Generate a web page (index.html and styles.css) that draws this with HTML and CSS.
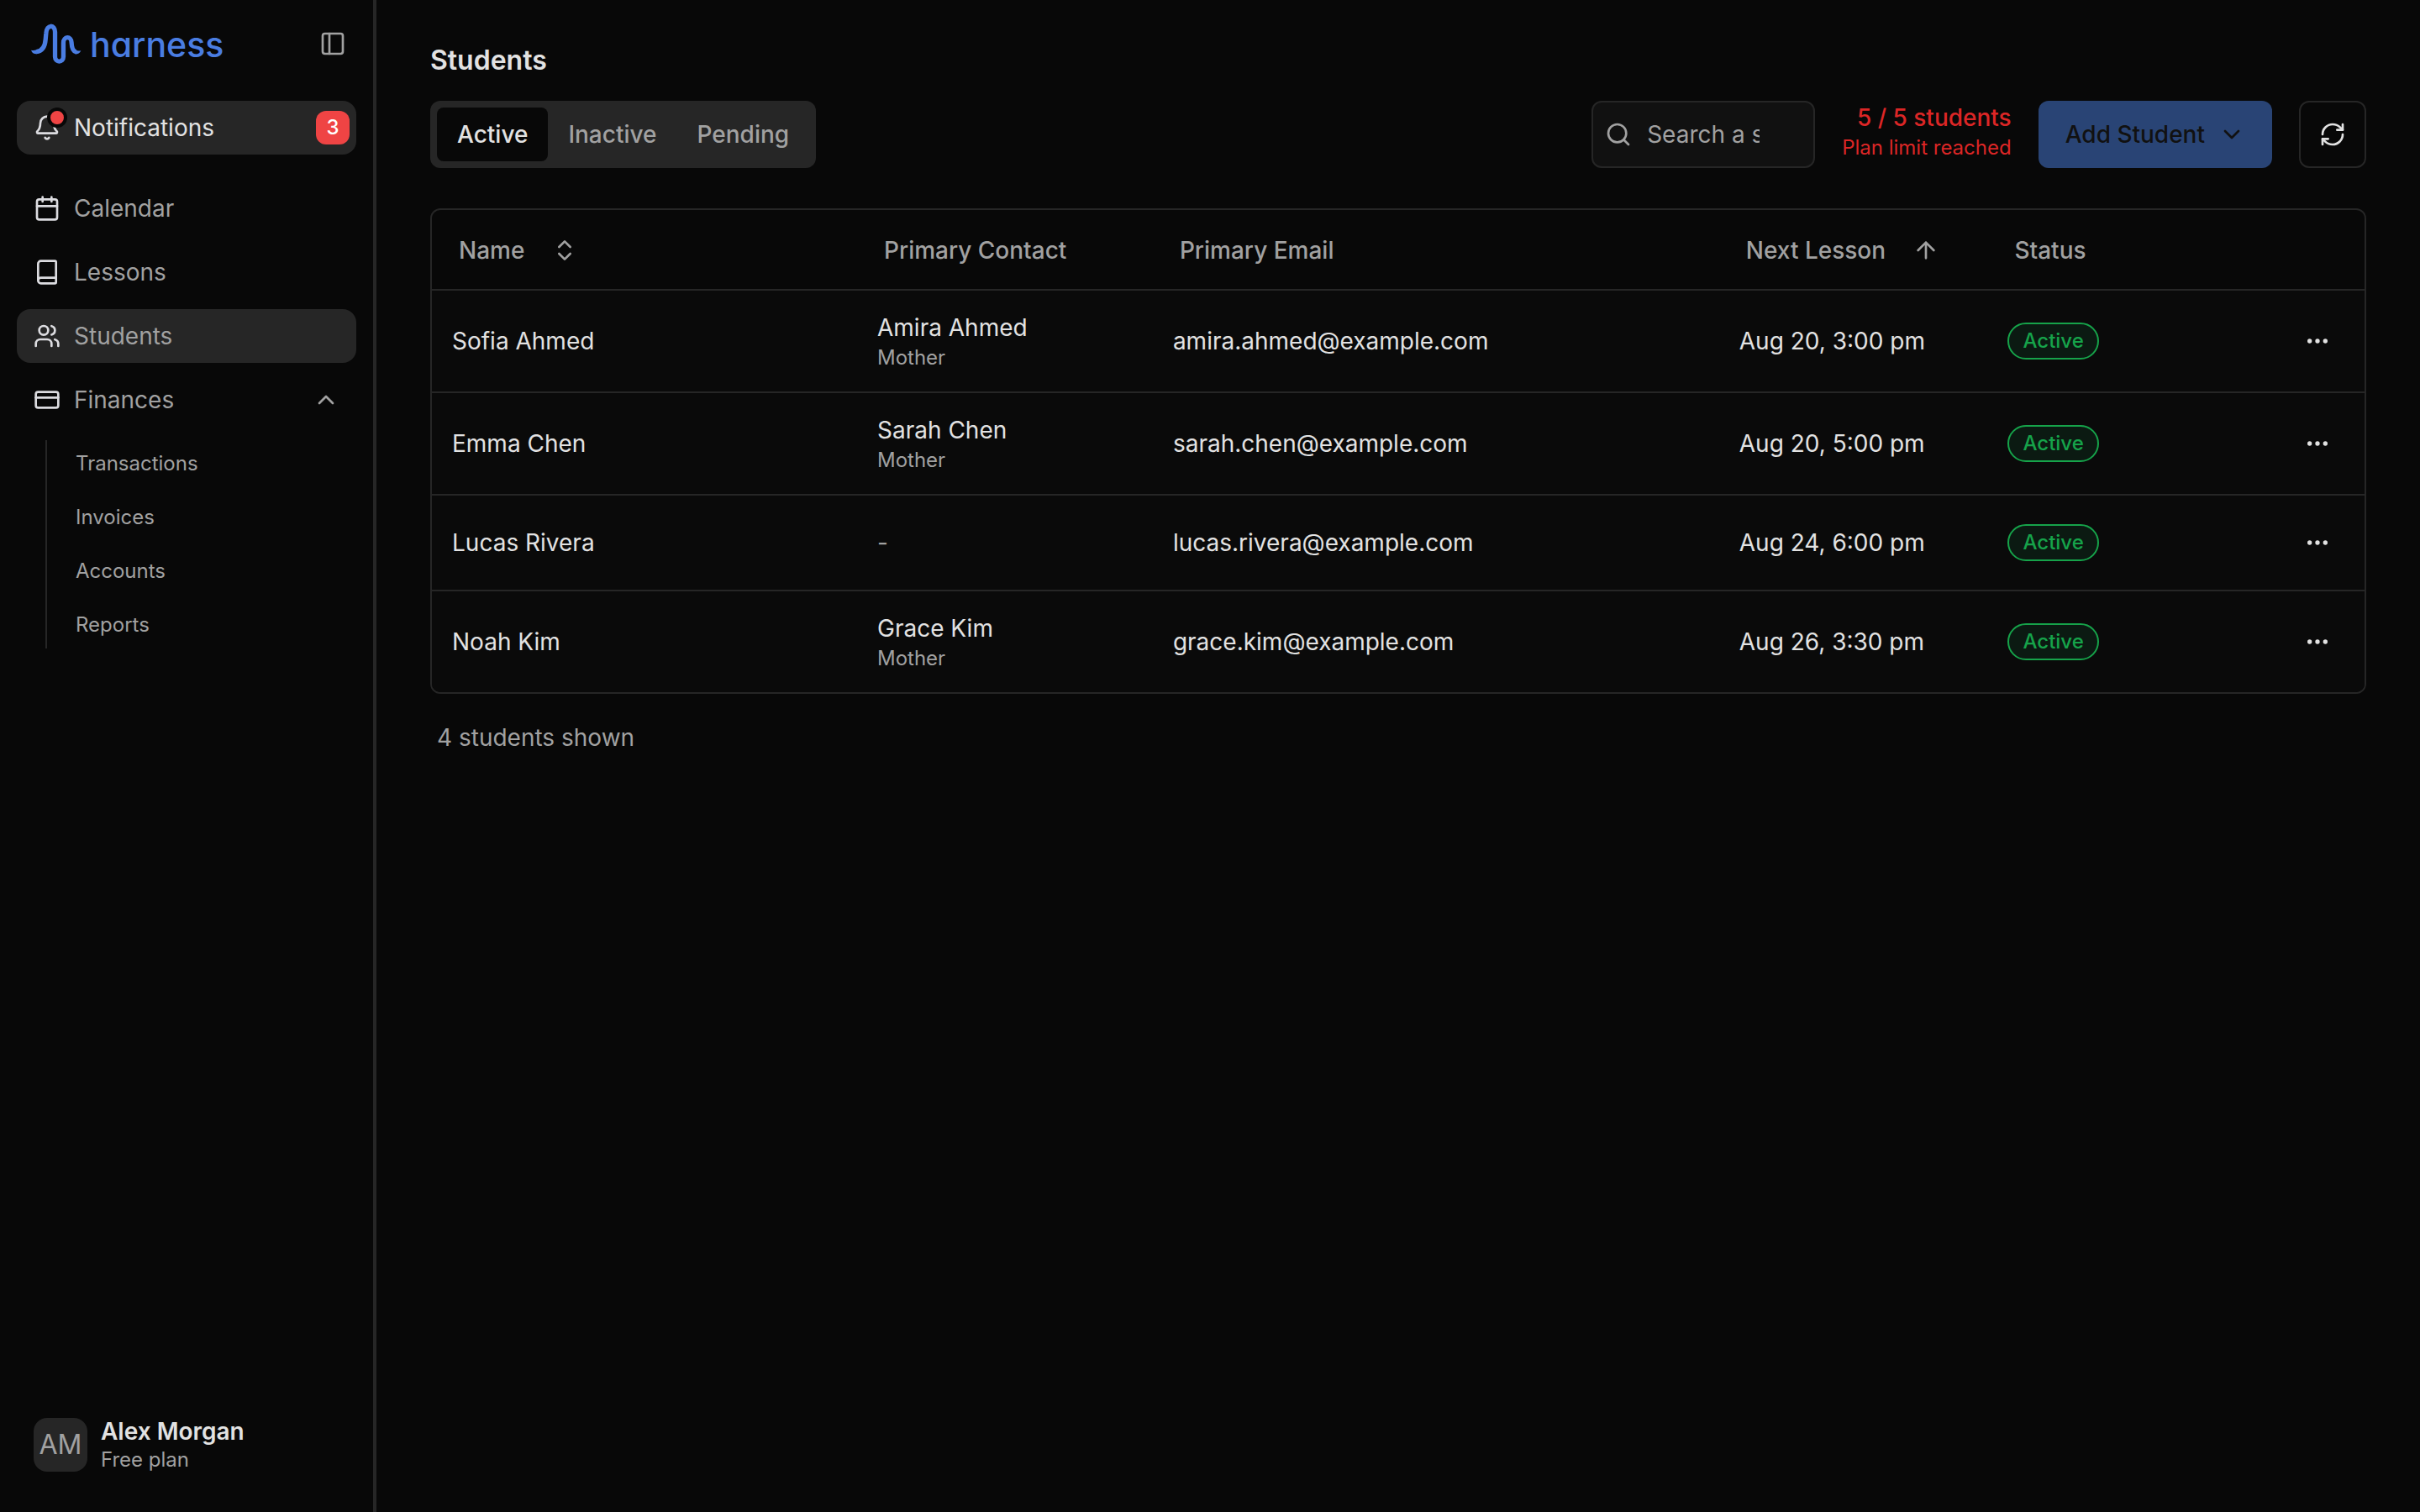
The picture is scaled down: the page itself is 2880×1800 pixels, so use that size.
FILE: index.html
```html
<!DOCTYPE html>
<html lang="en">
<head>
  <meta charset="UTF-8">
  <meta name="viewport" content="width=device-width, initial-scale=1.0">
  <title>Students - Harness</title>
  <link rel="stylesheet" href="styles.css">
</head>
<body>

  <!-- Shared icons -->
  <svg class="sprite" aria-hidden="true">
    <symbol id="panel" viewBox="0 0 24 24"><rect x="3" y="3" width="18" height="18" rx="2"/><path d="M9 3v18"/></symbol>
    <symbol id="bell" viewBox="0 0 24 24"><path d="M10.268 21a2 2 0 0 0 3.464 0"/><path d="M3.262 15.326A1 1 0 0 0 4 17h16a1 1 0 0 0 .74-1.673C19.41 13.956 18 12.499 18 8A6 6 0 0 0 6 8c0 4.499-1.411 5.956-2.738 7.326"/></symbol>
    <symbol id="calendar" viewBox="0 0 24 24"><path d="M8 2v4M16 2v4M3 10h18"/><rect x="3" y="4" width="18" height="18" rx="2"/></symbol>
    <symbol id="book" viewBox="0 0 24 24"><path d="M4 19.5v-15A2.5 2.5 0 0 1 6.5 2H19a1 1 0 0 1 1 1v18a1 1 0 0 1-1 1H6.5a1 1 0 0 1 0-5H20"/></symbol>
    <symbol id="users" viewBox="0 0 24 24"><path d="M16 21v-2a4 4 0 0 0-4-4H6a4 4 0 0 0-4 4v2"/><circle cx="9" cy="7" r="4"/><path d="M22 21v-2a4 4 0 0 0-3-3.87M16 3.13a4 4 0 0 1 0 7.75"/></symbol>
    <symbol id="card" viewBox="0 0 24 24"><rect x="2" y="5" width="20" height="14" rx="2"/><path d="M2 10h20"/></symbol>
    <symbol id="chevron-up" viewBox="0 0 24 24"><path d="m18 15-6-6-6 6"/></symbol>
    <symbol id="chevron-down" viewBox="0 0 24 24"><path d="m6 9 6 6 6-6"/></symbol>
    <symbol id="sort" viewBox="0 0 24 24"><path d="m7 15 5 5 5-5M7 9l5-5 5 5"/></symbol>
    <symbol id="arrow-up" viewBox="0 0 24 24"><path d="m5 12 7-7 7 7M12 19V5"/></symbol>
    <symbol id="search" viewBox="0 0 24 24"><circle cx="11" cy="11" r="8"/><path d="m21 21-4.3-4.3"/></symbol>
    <symbol id="refresh" viewBox="0 0 24 24"><path d="M3 12a9 9 0 0 1 9-9 9.75 9.75 0 0 1 6.74 2.74L21 8"/><path d="M21 3v5h-5"/><path d="M21 12a9 9 0 0 1-9 9 9.75 9.75 0 0 1-6.74-2.74L3 16"/><path d="M8 16H3v5"/></symbol>
    <symbol id="dots" viewBox="0 0 24 24"><circle cx="12" cy="12" r="1"/><circle cx="19" cy="12" r="1"/><circle cx="5" cy="12" r="1"/></symbol>
  </svg>

  <div class="app">
    <aside class="sidebar">
      <div class="sidebar-header">
        <a class="logo" href="#">
          <svg class="logo-mark" viewBox="108 84 184 144" aria-hidden="true">
            <path d="M130 185C150 183 161 168 163 140L165 118C167 86 197 86 197 114V203C197 225 227 225 227 203V153C227 128 255 128 256 151C257 172 262 184 273 186"/>
            <path class="tail" d="M111 179Q120 182 132 177V193Q116 194 111 179ZM270 178Q278 184 290 181Q284 194 270 194Z"/>
          </svg>
          <span class="logo-text">harness</span>
        </a>
        <button class="icon-button toggle" aria-label="Toggle sidebar"><svg class="icon"><use href="#panel"/></svg></button>
      </div>

      <button class="nav-item notifications">
        <span class="bell"><svg class="icon"><use href="#bell"/></svg><span class="dot"></span></span>
        <span class="nav-label">Notifications</span>
        <span class="count">3</span>
      </button>

      <nav class="nav">
        <a class="nav-item" href="#"><svg class="icon"><use href="#calendar"/></svg>Calendar</a>
        <a class="nav-item" href="#"><svg class="icon"><use href="#book"/></svg>Lessons</a>
        <a class="nav-item active" href="#"><svg class="icon"><use href="#users"/></svg>Students</a>
        <button class="nav-item" aria-expanded="true">
          <svg class="icon"><use href="#card"/></svg>
          <span class="nav-label">Finances</span>
          <svg class="icon chevron"><use href="#chevron-up"/></svg>
        </button>
      </nav>
      <div class="subnav">
        <a href="#">Transactions</a>
        <a href="#">Invoices</a>
        <a href="#">Accounts</a>
        <a href="#">Reports</a>
      </div>

      <button class="user">
        <span class="avatar">AM</span>
        <span class="user-info">
          <span class="user-name">Alex Morgan</span>
          <span class="user-plan">Free plan</span>
        </span>
      </button>
    </aside>

    <main class="main">
      <h1>Students</h1>

      <div class="toolbar">
        <div class="tabs" role="tablist">
          <button class="tab selected" role="tab" aria-selected="true">Active</button>
          <button class="tab" role="tab" aria-selected="false">Inactive</button>
          <button class="tab" role="tab" aria-selected="false">Pending</button>
        </div>
        <div class="actions">
          <label class="search">
            <svg class="icon"><use href="#search"/></svg>
            <input type="text" placeholder="Search a student" aria-label="Search a student">
          </label>
          <div class="limit">
            <span class="limit-count">5 / 5 students</span>
            <span class="limit-note">Plan limit reached</span>
          </div>
          <button class="add">Add Student<svg class="icon"><use href="#chevron-down"/></svg></button>
          <button class="icon-button refresh" aria-label="Refresh"><svg class="icon"><use href="#refresh"/></svg></button>
        </div>
      </div>

      <div class="table-wrap">
        <table>
          <colgroup>
            <col class="col-name">
            <col class="col-contact">
            <col class="col-email">
            <col class="col-lesson">
            <col class="col-status">
            <col>
          </colgroup>
          <thead>
            <tr>
              <th><button class="sort">Name<svg class="icon"><use href="#sort"/></svg></button></th>
              <th><span class="head">Primary Contact</span></th>
              <th><span class="head">Primary Email</span></th>
              <th><button class="sort">Next Lesson<svg class="icon"><use href="#arrow-up"/></svg></button></th>
              <th><span class="head">Status</span></th>
              <th></th>
            </tr>
          </thead>
          <tbody>
            <tr>
              <td>Sofia Ahmed</td>
              <td><div>Amira Ahmed</div><div class="relation">Mother</div></td>
              <td>amira.ahmed@example.com</td>
              <td>Aug 20, 3:00 pm</td>
              <td><span class="status">Active</span></td>
              <td><button class="icon-button more" aria-label="Open menu"><svg class="icon"><use href="#dots"/></svg></button></td>
            </tr>
            <tr>
              <td>Emma Chen</td>
              <td><div>Sarah Chen</div><div class="relation">Mother</div></td>
              <td>sarah.chen@example.com</td>
              <td>Aug 20, 5:00 pm</td>
              <td><span class="status">Active</span></td>
              <td><button class="icon-button more" aria-label="Open menu"><svg class="icon"><use href="#dots"/></svg></button></td>
            </tr>
            <tr>
              <td>Lucas Rivera</td>
              <td class="empty">-</td>
              <td>lucas.rivera@example.com</td>
              <td>Aug 24, 6:00 pm</td>
              <td><span class="status">Active</span></td>
              <td><button class="icon-button more" aria-label="Open menu"><svg class="icon"><use href="#dots"/></svg></button></td>
            </tr>
            <tr>
              <td>Noah Kim</td>
              <td><div>Grace Kim</div><div class="relation">Mother</div></td>
              <td>grace.kim@example.com</td>
              <td>Aug 26, 3:30 pm</td>
              <td><span class="status">Active</span></td>
              <td><button class="icon-button more" aria-label="Open menu"><svg class="icon"><use href="#dots"/></svg></button></td>
            </tr>
          </tbody>
        </table>
      </div>

      <p class="summary">4 students shown</p>
    </main>
  </div>

</body>
</html>
```
FILE: styles.css
```css
* {
  box-sizing: border-box;
}

body {
  margin: 0;
  background-color: #080808;
  color: #e2e2e2;
  font-family: Inter, sans-serif;
  font-size: 28px;
  line-height: 40px;
}

button {
  padding: 0;
  border: none;
  background: none;
  color: inherit;
  font: inherit;
  cursor: pointer;
}

a {
  color: inherit;
  text-decoration: none;
}

.sprite {
  position: absolute;
  width: 0;
  height: 0;
}

.icon {
  display: block;
  flex: none;
  width: 32px;
  height: 32px;
  fill: none;
  stroke: currentColor;
  stroke-width: 2;
  stroke-linecap: round;
  stroke-linejoin: round;
}

.icon-button {
  display: flex;
  align-items: center;
  justify-content: center;
}

.app {
  display: flex;
  min-height: 100vh;
}

/* Sidebar */
.sidebar {
  display: flex;
  flex-direction: column;
  flex: none;
  width: 448px;
  padding: 24px 20px 46px;
  border-right: 4px solid #262626;
  color: #a1a1a1;
}

.sidebar-header {
  display: flex;
  align-items: center;
  justify-content: space-between;
  height: 56px;
  margin-bottom: 40px;
  padding: 0 12px 0 16px;
}

.logo {
  display: flex;
  align-items: center;
  gap: 10px;
  color: #4a7de2;
}

.logo-mark {
  width: 61px;
  height: 48px;
  fill: none;
  stroke: currentColor;
  stroke-width: 16;
}

.logo-mark .tail {
  fill: currentColor;
  stroke: none;
}

.logo-text {
  padding-top: 2px;
  font-size: 41px;
  font-weight: 500;
  line-height: 48px;
  font-feature-settings: "cv11";
}

.nav-item {
  display: flex;
  align-items: center;
  gap: 16px;
  width: 100%;
  height: 64px;
  padding: 0 20px;
  border-radius: 16px;
  text-align: left;
}

.nav-item .icon {
  color: #dcdce0;
}

.nav-item .chevron {
  color: #a1a1a1;
}

.nav-item.active,
.notifications {
  background-color: #262626;
}

.notifications {
  margin-bottom: 32px;
  padding-right: 8px;
  color: #e2e2e2;
}

.nav-label {
  flex: 1;
}

.bell {
  position: relative;
}

.dot {
  position: absolute;
  top: -8px;
  right: -8px;
  width: 24px;
  height: 24px;
  border: 4px solid #080808;
  border-radius: 50%;
  background-color: #ef4444;
}

.count {
  width: 40px;
  border-radius: 12px;
  background-color: #ef4444;
  color: #fff;
  font-size: 24px;
  font-weight: 500;
  text-align: center;
}

.nav {
  display: flex;
  flex-direction: column;
  gap: 12px;
}

.subnav {
  display: flex;
  flex-direction: column;
  gap: 8px;
  margin: 16px 0 auto 34px;
  padding-left: 34px;
  border-left: 2px solid #262626;
  font-size: 24px;
  line-height: 56px;
}

.user {
  display: flex;
  align-items: center;
  gap: 16px;
  margin-left: 20px;
  text-align: left;
}

.avatar {
  width: 64px;
  border-radius: 16px;
  background-color: #262626;
  font-size: 32px;
  line-height: 64px;
  text-align: center;
}

.user-info {
  display: flex;
  flex-direction: column;
}

.user-name {
  color: #e2e2e2;
  font-weight: 600;
  line-height: 36px;
}

.user-plan {
  font-size: 24px;
  line-height: 32px;
}

/* Page */
.main {
  flex: 1;
  min-width: 0;
  padding: 48px 64px;
}

h1 {
  margin: 0 0 24px;
  font-size: 32px;
  font-weight: 600;
  line-height: 48px;
}

.toolbar {
  display: flex;
  align-items: center;
  justify-content: space-between;
  margin-bottom: 48px;
}

.tabs {
  display: flex;
  padding: 8px;
  border-radius: 12px;
  background-color: #262626;
}

.tab {
  height: 64px;
  padding: 0 24px;
  border-radius: 8px;
  color: #a1a1a1;
  font-weight: 500;
}

.tab.selected {
  background-color: #080808;
  color: #e2e2e2;
}

.actions {
  display: flex;
  gap: 32px;
}

.search {
  display: flex;
  align-items: center;
  gap: 18px;
  width: 266px;
  height: 80px;
  padding: 0 64px 0 14px;
  border: 2px solid #262626;
  border-radius: 12px;
  background-color: #111;
  color: #a1a1a1;
}

.search input {
  width: 100%;
  min-width: 0;
  padding: 0;
  border: none;
  outline: none;
  background: none;
  color: #e2e2e2;
  font: inherit;
}

.search input::placeholder {
  color: #a1a1a1;
}

.limit {
  display: flex;
  flex-direction: column;
  color: #dc2626;
  text-align: right;
}

.limit-count {
  font-weight: 500;
}

.limit-note {
  font-size: 24px;
  line-height: 32px;
}

.add {
  display: flex;
  align-items: center;
  gap: 16px;
  height: 80px;
  padding: 0 32px;
  border-radius: 12px;
  background-color: #294475;
  color: #111;
  font-weight: 500;
}

.refresh {
  width: 80px;
  height: 80px;
  border: 2px solid #262626;
  border-radius: 12px;
}

/* Table */
.table-wrap {
  overflow: hidden;
  border: 2px solid #262626;
  border-radius: 12px;
}

table {
  width: 100%;
  table-layout: fixed;
  border-spacing: 0;
}

.col-name {
  width: 22%;
}

.col-contact {
  width: 15.3%;
}

.col-email {
  width: 29.3%;
}

.col-lesson {
  width: 13.9%;
}

.col-status {
  width: 9.5%;
}

th {
  height: 96px;
  padding: 2px 24px 0;
  border-bottom: 2px solid #262626;
  color: #a1a1a1;
  font-weight: 500;
  text-align: left;
}

.head {
  padding-left: 8px;
}

.sort {
  display: flex;
  align-items: center;
  gap: 32px;
  padding-left: 8px;
  white-space: nowrap;
}

td {
  padding: 24px;
  border-bottom: 2px solid #262626;
  background-color: #0a0a0a;
}

tbody tr:last-child td {
  border-bottom: none;
}

.relation {
  color: #a1a1a1;
  font-size: 24px;
  line-height: 32px;
}

.empty {
  color: #a1a1a1;
}

.status {
  display: block;
  width: fit-content;
  padding: 4px 16px;
  border: 2px solid #16a34a;
  border-radius: 22px;
  background-color: #0b1a12;
  color: #16a34a;
  font-size: 24px;
  font-weight: 500;
  line-height: 32px;
}

.more {
  width: 64px;
  height: 64px;
  margin-left: auto;
}

.summary {
  margin: 32px 0 0;
  padding-left: 8px;
  color: #a1a1a1;
}
```
